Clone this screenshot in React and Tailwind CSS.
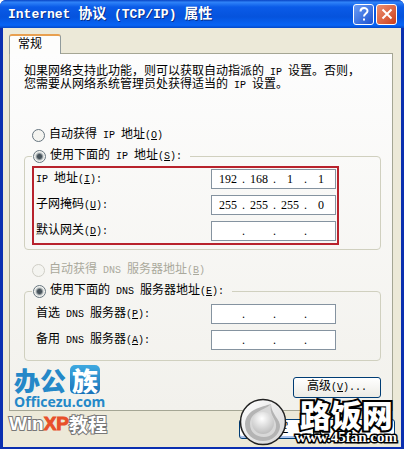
import React from "react";

const latin = /([\x20-\x7e]+)/;

// Chinese at full width, Latin set in a half-width monospace; "_X" underlines the access key X.
function Mixed({ text, small = "text-[10px]" }) {
  return text.split(latin).map((part, i) =>
    i % 2 ? (
      <span key={i} className={`whitespace-pre ${small}`}>
        {part.split(/(_.)/).map((p, j) => (j % 2 ? <u key={j}>{p[1]}</u> : p))}
      </span>
    ) : (
      part
    )
  );
}

function Radio({ id, name, text, checked, disabled }) {
  return (
    <label
      htmlFor={id}
      className={`flex items-center gap-1 whitespace-nowrap leading-4 ${disabled ? "text-[#aaa99c]" : ""}`}
    >
      <input
        id={id}
        name={name}
        type="radio"
        defaultChecked={checked}
        disabled={disabled}
        className="size-[13px] shrink-0 appearance-none rounded-full border border-[#66757f] bg-[#f4f4f0] checked:bg-[radial-gradient(circle,#46525a_0_2px,#d3d8d8_4px,#f4f4f0_5px)] disabled:border-[#cfcec6]"
      />
      <span>
        <Mixed text={text} />
      </span>
    </label>
  );
}

function Address({ text, label, octets = ["", "", "", ""] }) {
  return (
    <div className="flex h-5 items-center justify-between">
      <span>
        <Mixed text={text} />
      </span>
      <div
        role="group"
        aria-label={label}
        className="flex h-5 w-[125px] items-center border border-[#8593a0] bg-white pl-0.5 font-['Liberation_Serif',serif]"
      >
        {octets.map((o, i) => (
          <React.Fragment key={i}>
            {i > 0 && <span className="w-[3px] text-center">.</span>}
            <input
              type="text"
              aria-label={`${label} ${i + 1}`}
              defaultValue={o}
              className="w-0 min-w-0 flex-1 bg-transparent text-center outline-none"
            />
          </React.Fragment>
        ))}
      </div>
    </div>
  );
}

function OfficeMark() {
  return (
    <div className="absolute bottom-4 left-[9px] font-['Noto_Sans_CJK_SC',sans-serif]">
      <div className="ml-[5px] flex items-center gap-1 text-[26px] leading-[29px] font-black text-[#2488c8]">
        <span>办公</span>
        <span className="flex h-[29px] w-[30px] items-center justify-center rounded-[5px] bg-gradient-to-b from-[#3fa9e0] to-[#1972b8] text-white">
          族
        </span>
      </div>
      <div className="ml-[5px] font-['Open_Sans',sans-serif] text-[14px] leading-4 font-bold text-[#2488c8]">
        Officezu.com
      </div>
      <div className="mt-1 flex items-center text-[19px] leading-5 font-bold text-white [-webkit-text-stroke:2px_#777] [paint-order:stroke_fill]">
        <span className="font-['Liberation_Sans',sans-serif]">Win</span>
        <span className="font-['Liberation_Sans',sans-serif] text-[#e8502a] [-webkit-text-stroke:1px_#e8502a]">XP</span>
        <span>教程</span>
      </div>
    </div>
  );
}

function FanMark() {
  return (
    <div className="absolute right-[7px] bottom-1 flex items-center gap-2">
      <svg viewBox="0 0 48 48" className="size-12" aria-hidden="true">
        <defs>
          <linearGradient id="disc" x1="0" y1="0" x2="1" y2="1">
            <stop offset="0" stopColor="#fff" />
            <stop offset="1" stopColor="#d4d4d4" />
          </linearGradient>
          <radialGradient id="ball" cx=".45" cy=".3" r=".8">
            <stop offset="0" stopColor="#fff" />
            <stop offset="1" stopColor="#b4b4b4" />
          </radialGradient>
        </defs>
        <circle cx="24" cy="24" r="22.5" fill="url(#disc)" stroke="#222" strokeWidth="1.5" />
        <path d="M32 6C23 9 7 11 6 26c0 10 8 17 18 17 9 0 16-6 17-14 1-7-9-13-9-23Z" fill="#b4b4b4" />
        <path d="M32 6C27 12 11 13 11 26c0 8 6 13 14 13 8 0 13-6 12-13-1-6-7-10-5-20Z" fill="#d8d8d8" />
        <circle cx="24" cy="25" r="11" fill="url(#ball)" />
      </svg>
      <div className="flex flex-col items-center pb-px text-white [-webkit-text-stroke:4px_black] [paint-order:stroke_fill]">
        <span className="font-['Noto_Sans_CJK_SC',sans-serif] text-[31px] leading-[31px] font-black">路饭网</span>
        <span className="font-['Liberation_Serif',serif] text-[15px] leading-4 font-bold [-webkit-text-stroke:3px_black]">
          www.45fan.com
        </span>
      </div>
    </div>
  );
}

export default function App() {
  return (
    <main className="relative flex flex-col overflow-hidden rounded-t-md bg-[#0a2fb0] font-['Liberation_Mono','Noto_Sans_CJK_SC',monospace] text-[12px] leading-3 text-black">
      <header className="flex h-7 items-center gap-0.5 bg-[linear-gradient(#0843c4,#2f83f8_8%,#0a5be8_25%,#0553dd_60%,#0764f5_90%,#0348c8)] pr-[7px] pl-2 text-white">
        <h1 className="flex-1 text-[14px] leading-5 font-bold whitespace-nowrap [text-shadow:1px_1px_#062f8a]">
          <Mixed text="Internet 协议 (TCP/IP) 属性" small="text-[13px]" />
        </h1>
        <button
          aria-label="帮助"
          className="flex size-[21px] items-center justify-center rounded-[3px] border border-white bg-gradient-to-br from-[#6b9cf5] to-[#1c52d0]"
        >
          <svg viewBox="0 0 16 16" className="size-4" fill="none" stroke="white" strokeWidth="2" aria-hidden="true">
            <path d="M4.500 5.500c0-4.500 7-4.500 7-.5C11.500 7.500 8 7.500 8 10.500M8 12.500v2" />
          </svg>
        </button>
        <button
          aria-label="关闭"
          className="flex size-[21px] items-center justify-center rounded-[3px] border border-white bg-gradient-to-br from-[#ec8f70] to-[#cc3c14]"
        >
          <svg viewBox="0 0 16 16" className="size-4" fill="none" stroke="white" strokeWidth="2" aria-hidden="true">
            <path d="m3.500 3.500 9 9m0-9-9 9" />
          </svg>
        </button>
      </header>

      <div className="mx-[3px] mb-[3px] bg-[#ece9d8] px-1.5 pt-1.5 pb-2">
        <div role="tablist" className="relative z-10 -mb-px flex">
          <button
            role="tab"
            aria-selected="true"
            className="h-5 w-[52px] rounded-t-[3px] border border-t-2 border-b-0 border-[#919b9c] border-t-[#e8a050] bg-[#fdfdfc] pr-2.5 text-[12px]"
          >
            常规
          </button>
        </div>
        <section className="mr-0.5 border border-[#a5a694] bg-gradient-to-b from-[#fdfdfd] to-[#f2f1ec] pt-3 pr-[11px] pb-3 pl-3">
          <p className="pl-0.5">
            <Mixed text="如果网络支持此功能，则可以获取自动指派的 IP 设置。否则，" />
            <br />
            <Mixed text="您需要从网络系统管理员处获得适当的 IP 设置。" />
          </p>

          <div className="mt-[35px] ml-2.5">
            <Radio id="ip-auto" name="ip" text="自动获得 IP 地址(_O)" />
          </div>
          <fieldset className="mt-1 ml-0.5 rounded border border-[#d0d0bf] pr-[41px] pb-1 pl-[7px]">
            <legend className="pr-2 pl-px">
              <Radio id="ip-manual" name="ip" text="使用下面的 IP 地址(_S):" checked />
            </legend>
            <div className="mt-px flex flex-col gap-1.5 border-2 border-[#b8222c] pt-px pr-px pb-0.5 pl-0.5">
              <Address text="IP 地址(_I):" label="IP 地址" octets={["192", "168", "1", "1"]} />
              <Address text="子网掩码(_U):" label="子网掩码" octets={["255", "255", "255", "0"]} />
              <Address text="默认网关(_D):" label="默认网关" />
            </div>
          </fieldset>

          <div className="mt-3 ml-2.5">
            <Radio id="dns-auto" name="dns" text="自动获得 DNS 服务器地址(_B)" disabled />
          </div>
          <fieldset className="mt-1 ml-0.5 rounded border border-[#d0d0bf] pr-11 pb-2.5 pl-[7px]">
            <legend className="pr-2 pl-px">
              <Radio id="dns-manual" name="dns" text="使用下面的 DNS 服务器地址(_E):" checked />
            </legend>
            <div className="mt-1 flex flex-col gap-1.5 pl-1">
              <Address text="首选 DNS 服务器(_P):" label="首选 DNS 服务器" />
              <Address text="备用 DNS 服务器(_A):" label="备用 DNS 服务器" />
            </div>
          </fieldset>

          <div className="mt-4 flex justify-end">
            <button className="h-[21px] w-[88px] rounded-[3px] border border-[#003c74] bg-gradient-to-b from-white to-[#ecebe5]">
              <Mixed text="高级(_V)..." />
            </button>
          </div>
        </section>
        <div className="mt-2 flex justify-end gap-1.5">
          <button className="h-5 w-[75px] rounded-[3px] border border-[#003c74] bg-white shadow-[inset_0_-2px_#a9c3ee]">
            确定
          </button>
          <button aria-label="取消" className="h-5 w-[75px] rounded-[3px] border border-[#003c74] bg-white" />
        </div>
      </div>

      <OfficeMark />
      <FanMark />
    </main>
  );
}
